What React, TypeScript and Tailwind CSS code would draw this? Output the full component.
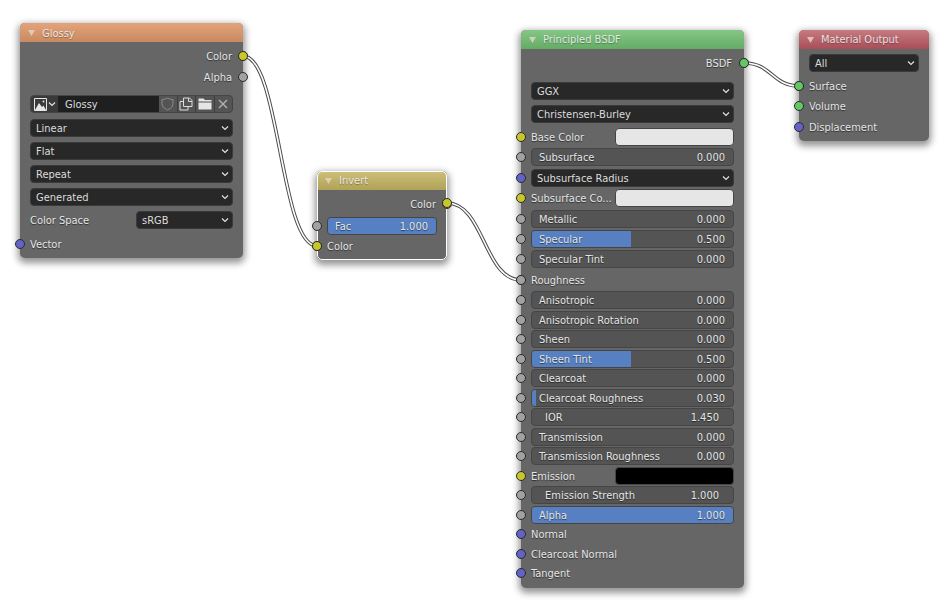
const textShadow = "[text-shadow:0_1px_1px_rgba(0,0,0,0.55)]"

const socketColors = {
  yellow: "bg-[#c7c729]",
  gray: "bg-[#a1a1a1]",
  blue: "bg-[#6363c7]",
  green: "bg-[#63c763]",
}

type SocketColor = keyof typeof socketColors

function Socket({ color, side = "left" }: { color: SocketColor; side?: "left" | "right" }) {
  const place = side === "left" ? "left-[-5px]" : "right-[-5px]"
  return (
    <span
      className={`absolute top-1/2 -translate-y-1/2 size-[10px] rounded-full border border-[#2b2b2b] ${socketColors[color]} ${place}`}
    />
  )
}

function Chevron() {
  return (
    <svg width="8" height="6" viewBox="0 0 8 6" className="shrink-0" fill="none">
      <path d="M1 1.5 L4 4.5 L7 1.5" stroke="#e6e6e6" strokeWidth="1.1" />
    </svg>
  )
}

function Header({ title, color }: { title: string; color: string }) {
  return (
    <div className={`h-[19px] flex items-center pl-[8px] gap-[7px] rounded-t-[5px] ${color}`}>
      <svg width="7" height="6" viewBox="0 0 7 6">
        <path d="M0 0 H7 L3.5 6 Z" fill="#e6d6c6" fillOpacity="0.8" />
      </svg>
      <span className="text-[#eeeeee] opacity-90 [text-shadow:0_1px_1px_rgba(0,0,0,0.35)]">{title}</span>
    </div>
  )
}

function Select({ label, className = "" }: { label: string; className?: string }) {
  return (
    <div
      className={`h-[18px] flex-1 flex items-center justify-between pl-[5px] pr-[3px] rounded-[4px] bg-[#282828] border border-[#3a3a3a] text-[#dcdcdc] ${className}`}
    >
      <span>{label}</span>
      <Chevron />
    </div>
  )
}

function Slider({
  label,
  value,
  fill = 0,
  plain = false,
}: {
  label: string
  value: string
  fill?: number
  plain?: boolean
}) {
  return (
    <div className="relative flex-1 h-[18px] rounded-[4px] bg-[#545454] border border-[#454545] overflow-hidden">
      {fill > 0 && <div className="absolute inset-y-0 left-0 bg-[#5680c2]" style={{ width: `${fill}%` }} />}
      <div
        className={`relative h-full flex items-center justify-between text-[#e6e6e6] ${textShadow} ${
          plain ? "pl-[13px] pr-[14px]" : "pl-[7px] pr-[8px]"
        }`}
      >
        <span>{label}</span>
        <span>{value}</span>
      </div>
    </div>
  )
}

function Row({
  socket,
  side = "left",
  gap = "",
  align = "",
  children,
}: {
  socket?: SocketColor
  side?: "left" | "right"
  gap?: string
  align?: string
  children: React.ReactNode
}) {
  return (
    <div className={`relative h-[18px] flex items-center pl-[10px] pr-[10px] ${gap} ${align}`}>
      {socket && <Socket color={socket} side={side} />}
      {children}
    </div>
  )
}

function Label({ children }: { children: React.ReactNode }) {
  return <span className={`text-[#e6e6e6] whitespace-nowrap ${textShadow}`}>{children}</span>
}

function ColorField({ label, color, socket, gap }: { label: string; color: string; socket: SocketColor; gap: string }) {
  return (
    <Row socket={socket} gap={gap}>
      <div className="w-[84px] shrink-0">
        <Label>{label}</Label>
      </div>
      <div className={`flex-1 h-[18px] rounded-[4px] border border-[#454545] ${color}`} />
    </Row>
  )
}

function ImageRow() {
  return (
    <div className="flex h-[18px] flex-1 rounded-[4px] bg-[#545454] border border-[#454545] overflow-hidden">
      <div className="w-[28px] flex items-center justify-center gap-[1px] bg-[#3a3a3a] border-r border-[#222]">
        <svg width="13" height="13" viewBox="0 0 13 13">
          <path d="M0.5 0.5 H12.5 V12.5 H0.5 Z" fill="none" stroke="#e6e6e6" />
          <path d="M1 12 L5 5 L8 9 L9.5 7.5 L12 12 Z" fill="#e6e6e6" />
          <circle cx="9.5" cy="3.5" r="1" fill="#e6e6e6" />
        </svg>
        <Chevron />
      </div>
      <div className="w-[100px] bg-[#1f1f1f] pl-[6px] flex items-center text-[#dcdcdc]">Glossy</div>
      <div className="flex-1 flex items-center justify-center border-r border-[#3d3d3d]">
        <svg width="13" height="14" viewBox="0 0 13 14" fill="none">
          <path d="M1 2.5 Q4 2.5 6.5 1 Q9 2.5 12 2.5 V7 Q12 11 6.5 13 Q1 11 1 7 Z" stroke="#8a8a8a" strokeWidth="1" />
        </svg>
      </div>
      <div className="flex-1 flex items-center justify-center border-r border-[#3d3d3d]">
        <svg width="14" height="14" viewBox="0 0 14 14" fill="none">
          <path d="M4.5 1 H10.5 L13 3.5 V9.5 H4.5 Z" fill="none" stroke="#dcdcdc" />
          <path d="M9.5 1 V4.5 H13" stroke="#dcdcdc" />
          <path d="M4 4.5 H1 V13 H9 V10" stroke="#dcdcdc" />
        </svg>
      </div>
      <div className="flex-1 flex items-center justify-center border-r border-[#3d3d3d]">
        <svg width="14" height="12" viewBox="0 0 14 12">
          <path d="M0.5 0.5 H5.5 L7 2 H13.5 V3.5 H0.5 Z" fill="#e6e6e6" />
          <path d="M0.5 4.5 H13.5 V11.5 H0.5 Z" fill="#e6e6e6" />
        </svg>
      </div>
      <div className="flex-1 flex items-center justify-center">
        <svg width="10" height="10" viewBox="0 0 10 10" fill="none">
          <path d="M1 1 L9 9 M9 1 L1 9" stroke="#b4b4b4" strokeWidth="1.3" />
        </svg>
      </div>
    </div>
  )
}

type BsdfRow = {
  kind: "slider" | "label" | "color" | "select"
  label: string
  value?: string
  fill?: number
  plain?: boolean
  socket: SocketColor
  gap: string
  color?: string
}

const bsdfRows: BsdfRow[] = [
  { kind: "color", label: "Base Color", socket: "yellow", gap: "mt-[5px]", color: "bg-[#e6e6e6]" },
  { kind: "slider", label: "Subsurface", value: "0.000", socket: "gray", gap: "mt-[2px]" },
  { kind: "select", label: "Subsurface Radius", socket: "blue", gap: "mt-[3px]" },
  { kind: "color", label: "Subsurface Co...", socket: "yellow", gap: "mt-[2px]", color: "bg-[#e6e6e6]" },
  { kind: "slider", label: "Metallic", value: "0.000", socket: "gray", gap: "mt-[3px]" },
  { kind: "slider", label: "Specular", value: "0.500", fill: 49.5, socket: "gray", gap: "mt-[2px]" },
  { kind: "slider", label: "Specular Tint", value: "0.000", socket: "gray", gap: "mt-[2px]" },
  { kind: "label", label: "Roughness", socket: "gray", gap: "mt-[3px]" },
  { kind: "slider", label: "Anisotropic", value: "0.000", socket: "gray", gap: "mt-[2px]" },
  { kind: "slider", label: "Anisotropic Rotation", value: "0.000", socket: "gray", gap: "mt-[2px]" },
  { kind: "slider", label: "Sheen", value: "0.000", socket: "gray", gap: "mt-[1px]" },
  { kind: "slider", label: "Sheen Tint", value: "0.500", fill: 49.5, socket: "gray", gap: "mt-[2px]" },
  { kind: "slider", label: "Clearcoat", value: "0.000", socket: "gray", gap: "mt-[1px]" },
  { kind: "slider", label: "Clearcoat Roughness", value: "0.030", fill: 2, socket: "gray", gap: "mt-[2px]" },
  { kind: "slider", label: "IOR", value: "1.450", plain: true, socket: "gray", gap: "mt-[1px]" },
  { kind: "slider", label: "Transmission", value: "0.000", socket: "gray", gap: "mt-[2px]" },
  { kind: "slider", label: "Transmission Roughness", value: "0.000", socket: "gray", gap: "mt-[1px]" },
  { kind: "color", label: "Emission", socket: "yellow", gap: "mt-[2px]", color: "bg-[#000000]" },
  { kind: "slider", label: "Emission Strength", value: "1.000", plain: true, socket: "gray", gap: "mt-[1px]" },
  { kind: "slider", label: "Alpha", value: "1.000", fill: 100, socket: "gray", gap: "mt-[2px]" },
  { kind: "label", label: "Normal", socket: "blue", gap: "mt-[1px]" },
  { kind: "label", label: "Clearcoat Normal", socket: "blue", gap: "mt-[2px]" },
  { kind: "label", label: "Tangent", socket: "blue", gap: "mt-[1px]" },
]

function Wire({ d }: { d: string }) {
  return (
    <>
      <path d={d} fill="none" stroke="#4a4a4a" strokeWidth="3.6" />
      <path d={d} fill="none" stroke="#ffffff" strokeWidth="1.6" />
    </>
  )
}

const nodeBody = "absolute rounded-[5px] bg-[#666666] shadow-[0_3px_7px_2px_rgba(0,0,0,0.42)]"

export default function App() {
  return (
    <div className="relative w-[946px] h-[608px] overflow-hidden bg-white text-[11px] leading-none font-['DejaVu_Sans_Condensed','DejaVu_Sans',sans-serif] [font-stretch:condensed]">
      {/* Glossy */}
      <div className={`${nodeBody} left-[20px] top-[23px] w-[223px] h-[235px]`}>
        <Header title="Glossy" color="pt-[1px] bg-gradient-to-b from-[#e3a37c] to-[#c98a60]" />
        <Row socket="yellow" side="right" gap="mt-[5px]" align="justify-end pr-[11px]">
          <Label>Color</Label>
        </Row>
        <Row socket="gray" side="right" gap="mt-[3px]" align="justify-end pr-[11px]">
          <Label>Alpha</Label>
        </Row>
        <Row gap="mt-[9px]">
          <ImageRow />
        </Row>
        <Row gap="mt-[6px]">
          <Select label="Linear" />
        </Row>
        <Row gap="mt-[5px]">
          <Select label="Flat" />
        </Row>
        <Row gap="mt-[5px]">
          <Select label="Repeat" />
        </Row>
        <Row gap="mt-[5px]">
          <Select label="Generated" />
        </Row>
        <Row gap="mt-[5px]">
          <div className="w-[106px]">
            <Label>Color Space</Label>
          </div>
          <Select label="sRGB" />
        </Row>
        <Row socket="blue" gap="mt-[6px]">
          <Label>Vector</Label>
        </Row>
      </div>

      {/* Invert */}
      <div className={`${nodeBody} left-[317px] top-[171px] w-[130px] h-[89px] outline outline-1 -outline-offset-1 outline-white`}>
        <Header title="Invert" color="h-[18px] bg-gradient-to-b from-[#cfc07a] to-[#b0a257]" />
        <Row socket="yellow" side="right" gap="mt-[5px]" align="justify-end pr-[11px]">
          <Label>Color</Label>
        </Row>
        <Row socket="gray" gap="mt-[4px]">
          <Slider label="Fac" value="1.000" fill={100} />
        </Row>
        <Row socket="yellow" gap="mt-[2px]">
          <Label>Color</Label>
        </Row>
      </div>

      {/* Principled BSDF */}
      <div className={`${nodeBody} left-[521px] top-[30px] w-[223px] h-[558px]`}>
        <Header title="Principled BSDF" color="bg-gradient-to-b from-[#86c686] to-[#64ac66]" />
        <Row socket="green" side="right" gap="mt-[5px]" align="justify-end pr-[12px]">
          <Label>BSDF</Label>
        </Row>
        <Row gap="mt-[10px]">
          <Select label="GGX" />
        </Row>
        <Row gap="mt-[5px]">
          <Select label="Christensen-Burley" />
        </Row>
        {bsdfRows.map((row) => {
          if (row.kind === "color") {
            return <ColorField key={row.label} label={row.label} color={row.color!} socket={row.socket} gap={row.gap} />
          }
          return (
            <Row key={row.label} socket={row.socket} gap={row.gap}>
              {row.kind === "label" && <Label>{row.label}</Label>}
              {row.kind === "select" && <Select label={row.label} />}
              {row.kind === "slider" && (
                <Slider label={row.label} value={row.value!} fill={row.fill} plain={row.plain} />
              )}
            </Row>
          )
        })}
      </div>

      {/* Material Output */}
      <div className={`${nodeBody} left-[799px] top-[30px] w-[130px] h-[111px]`}>
        <Header title="Material Output" color="gap-[6px] bg-gradient-to-b from-[#c67a80] to-[#a84e58]" />
        <Row gap="mt-[5px]">
          <Select label="All" />
        </Row>
        <Row socket="green" gap="mt-[5px]">
          <Label>Surface</Label>
        </Row>
        <Row socket="green" gap="mt-[2px]">
          <Label>Volume</Label>
        </Row>
        <Row socket="blue" gap="mt-[3px]">
          <Label>Displacement</Label>
        </Row>
      </div>

      {/* Links, under the sockets but over the node edges */}
      <svg className="absolute inset-0 pointer-events-none" width="946" height="608">
        <Wire d="M243 56 C280 56 280 246 317 246" />
        <Wire d="M447 203 C484 203 484 280 521 280" />
        <Wire d="M744 63 C772 63 772 86 799 86" />
        <circle cx="243" cy="56" r="4.5" fill="#c7c729" stroke="#2b2b2b" />
        <circle cx="317" cy="246" r="4.5" fill="#c7c729" stroke="#2b2b2b" />
        <circle cx="447" cy="203" r="4.5" fill="#c7c729" stroke="#2b2b2b" />
        <circle cx="521" cy="280" r="4.5" fill="#a1a1a1" stroke="#2b2b2b" />
        <circle cx="744" cy="63" r="4.5" fill="#63c763" stroke="#2b2b2b" />
        <circle cx="799" cy="86" r="4.5" fill="#63c763" stroke="#2b2b2b" />
      </svg>
    </div>
  )
}
